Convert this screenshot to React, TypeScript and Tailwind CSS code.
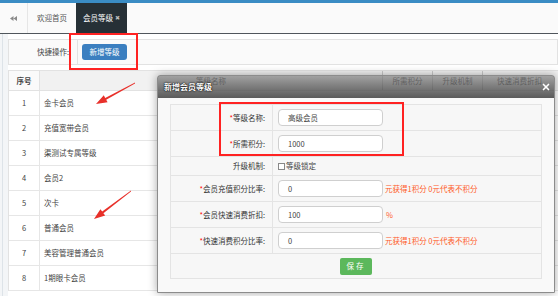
import { X } from "lucide-react";

const levels = ["金卡会员", "充值宽带会员", "渠测试专属等级", "会员2", "次卡", "普通会员", "美容管理普通会员", "1期眼卡会员"];

function FormRow({
  label,
  required,
  h = "h-[26px]",
  children
}: {
  label: string;
  required?: boolean;
  h?: string;
  children: React.ReactNode;
}) {
  return (
    <div className={`flex ${h} border-b border-[#e4e4e4]`}>
      <div className="flex w-[102px] shrink-0 items-center justify-end border-r border-[#e4e4e4] pr-[7px] text-[#333]">
        {required && <span className="text-[#f00]">*</span>}
        {label}:
      </div>
      <div className="flex flex-1 items-center pl-[5px]">{children}</div>
    </div>
  );
}

function Field({ value }: { value: string }) {
  return (
    <div className="flex h-[17px] w-[105px] items-center rounded-[4px] border border-[#cfcfcf] bg-white pl-[9px] text-[#444]">
      {value}
    </div>
  );
}

export default function App() {
  return (
    <div className="relative h-[296px] w-[558px] overflow-hidden bg-white font-['Noto_Sans_CJK_SC','Liberation_Sans',sans-serif] text-[7.5px] leading-none">
      <div className="h-[3px] bg-[#3a8cc4]" />

      {/* tabs */}
      <div className="flex h-[31px] border-b border-[#50565c] bg-[#fafafa]">
        <div className="flex w-[27px] items-center justify-center">
          <svg width="7" height="5" viewBox="0 0 7 5">
            <path d="M3.5 0 L0 2.5 L3.5 5 Z M7 0 L3.5 2.5 L7 5 Z" fill="#8a8a8a" />
          </svg>
        </div>
        <div className="flex w-[49px] items-center justify-center border-l border-[#e6e6e6] text-[#555]">欢迎首页</div>
        <div className="flex w-[51px] items-center justify-center gap-[2px] bg-[#263036] text-white">
          会员等级 <span className="text-[6px] text-[#bbb]">✖</span>
        </div>
      </div>

      {/* content */}
      <div className="flex h-[262px] bg-[#f3f5f7]">
        <div className="ml-[2px] w-[1px] bg-[#dde3e8]" />
        <div className="ml-[5px] flex-1 bg-white pt-[5px]">
          <div className="flex h-[26px] items-center border border-[#e2e2e2] bg-[#fafafa]">
            <div className="w-[60px] text-right text-[#444]">快捷操作:</div>
            <div className="ml-[8px] h-full w-[1px] bg-[#e2e2e2]" />
            <div className="ml-[4px] flex h-[16px] w-[45px] items-center justify-center rounded-[3px] bg-[#3b7fc0] text-white">
              新增等级
            </div>
          </div>

          <div className="mt-[5px] border-l border-t border-[#e2e2e2]">
            <div className="flex h-[20px] border-b border-[#e2e2e2] bg-[#f1f1f1] text-[#444]">
              <div className="flex w-[31px] items-center justify-center border-r border-[#e2e2e2] bg-[#fafafa] font-bold">序号</div>
              <div className="flex w-[343px] items-center border-r border-[#c8c8c8] pl-[156px]">等级名称</div>
              <div className="flex w-[50px] items-center justify-center border-r border-[#c8c8c8]">所需积分</div>
              <div className="flex w-[50px] items-center justify-center border-r border-[#c8c8c8]">升级机制</div>
              <div className="flex flex-1 items-center pl-[14px]">快速消费折扣</div>
            </div>
            {levels.map((name, i) => (
              <div key={name} className="flex h-[25px] border-b border-[#e6e6e6] text-[#444]">
                <div className="flex w-[31px] items-center justify-center border-r border-[#e6e6e6]">{i + 1}</div>
                <div className="flex flex-1 items-center pl-[4px]">{name}</div>
              </div>
            ))}
          </div>
        </div>
      </div>

      {/* annotations on the page */}
      <div className="absolute left-[69px] top-[33px] h-[37px] w-[69px] border-2 border-[#f22]" />
      <svg className="pointer-events-none absolute left-0 top-0" width="558" height="296">
        <polygon
          points="135,82.5 105.2,97.9 103.8,95.3 96,104 107.6,102.3 106.2,99.7 135,83.5"
          fill="#e8302a"
        />
        <polygon
          points="131,190.5 102.2,211.6 100.4,209.2 94,219 105.2,215.6 103.4,213.2 131,191.5"
          fill="#e8302a"
        />
      </svg>

      {/* dialog */}
      <div className="absolute left-[157px] top-[75px] flex h-[218px] w-[398px] flex-col rounded-t-[3px] border border-[#8c8c8c] shadow-[0_0_10px_rgba(0,0,0,0.35)]">
        <div className="relative flex h-[22px] shrink-0 items-center bg-gradient-to-b from-[rgba(130,130,130,0.72)] to-[rgba(50,50,50,0.8)] pl-[6px] text-[8px] font-bold text-white [text-shadow:0_0_2px_#000,0_0_1px_#000]">
          新增会员等级
          <X size={10} strokeWidth={4} className="absolute right-[3px] top-[6px] text-white" />
        </div>
        <div className="flex-1 bg-[#f9f9f9] px-[12px] pt-[6px]">
          <div className="border-l border-r border-t border-[#e4e4e4] bg-[#f7f7f7]">
            <FormRow label="等级名称" required>
              <Field value="高级会员" />
            </FormRow>
            <FormRow label="所需积分" required>
              <Field value="1000" />
            </FormRow>
            <FormRow label="升级机制" h="h-[19px]">
              <span className="flex items-center text-[#444]">
                <span className="mr-[1px] inline-block h-[7px] w-[7px] border border-[#888] bg-white" />
                等级锁定
              </span>
            </FormRow>
            <FormRow label="会员充值积分比率" required>
              <Field value="0" />
              <span className="ml-[2px] text-[#ff5a1f]">元获得1积分 0元代表不积分</span>
            </FormRow>
            <FormRow label="会员快速消费折扣" required>
              <Field value="100" />
              <span className="ml-[3px] text-[#ff5a1f]">%</span>
            </FormRow>
            <FormRow label="快速消费积分比率" required>
              <Field value="0" />
              <span className="ml-[2px] text-[#ff5a1f]">元获得1积分 0元代表不积分</span>
            </FormRow>
            <div className="flex h-[25px] items-center justify-center border-b border-[#e4e4e4]">
              <div className="flex h-[17px] w-[32px] items-center justify-center rounded-[2px] bg-[#5cb85c] tracking-[2px] text-white">
                保存
              </div>
            </div>
          </div>
        </div>
      </div>

      <div className="absolute left-[219px] top-[102px] h-[54px] w-[185px] border-2 border-[#f22]" />
    </div>
  );
}
